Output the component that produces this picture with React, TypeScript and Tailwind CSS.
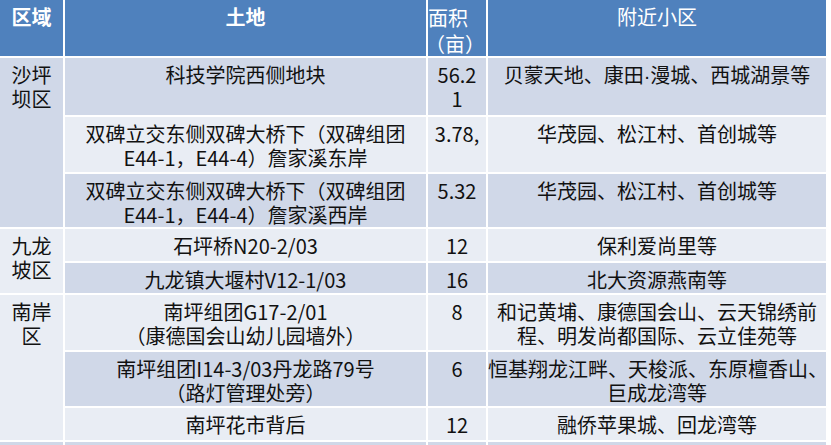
import React from "react";

const DARK = "bg-[#D0D8E8]";
const LIGHT = "bg-[#E9EDF4]";

type Cell = { lines: React.ReactNode[]; bg: string; span?: string; align?: string };

function C({ lines, bg, span = "", align = "text-center" }: Cell) {
  return (
    <div className={`${bg} ${span} ${align} pt-[5px] leading-[24px] text-[20px] text-[#111] whitespace-nowrap`}>
      {lines.map((l, i) => (
        <div key={i}>{l}</div>
      ))}
    </div>
  );
}

export default function App() {
  return (
    <div
      className="w-[831px] h-[445px] overflow-hidden bg-white"
      style={{ fontFamily: '"Noto Sans CJK SC", "Noto Sans", sans-serif' }}
    >
      <div className="grid grid-cols-[63px_361px_58px_338px] grid-rows-[56px_57px_55px_53px_32px_30px_55px_54px_32px_30px] gap-[2px] w-[826px]">
        {/* header */}
        <div className="bg-[#4F81BD] text-white text-center pt-[5px] leading-[24px] text-[20px] font-bold">区域</div>
        <div className="bg-[#4F81BD] text-white text-center pt-[5px] leading-[24px] text-[20px] font-bold">土地</div>
        <div className="bg-[#4F81BD] text-white text-left pt-[5px] leading-[26px] text-[20px] whitespace-nowrap">
          <div>面积</div>
          <div className="-ml-[3px]">（亩）</div>
        </div>
        <div className="bg-[#4F81BD] text-white text-center pt-[5px] leading-[24px] text-[20px]">附近小区</div>

        {/* row 1 */}
        <C lines={["沙坪", "坝区"]} bg={DARK} span="row-span-3" />
        <C lines={["科技学院西侧地块"]} bg={DARK} />
        <C lines={["56.2", "1"]} bg={DARK} />
        <C
          lines={[
            <>
              贝蒙天地、康田<span className="font-['Liberation_Sans',sans-serif]">·</span>漫城、西城湖景等
            </>,
          ]}
          bg={DARK}
        />

        {/* row 2 */}
        <C lines={["双碑立交东侧双碑大桥下（双碑组团", "E44-1，E44-4）詹家溪东岸"]} bg={LIGHT} />
        <C lines={["3.78,"]} bg={LIGHT} />
        <C lines={["华茂园、松江村、首创城等"]} bg={LIGHT} />

        {/* row 3 */}
        <C lines={["双碑立交东侧双碑大桥下（双碑组团", "E44-1，E44-4）詹家溪西岸"]} bg={DARK} />
        <C lines={["5.32"]} bg={DARK} />
        <C lines={["华茂园、松江村、首创城等"]} bg={DARK} />

        {/* row 4 */}
        <C lines={["九龙", "坡区"]} bg={LIGHT} span="row-span-2" />
        <C lines={["石坪桥N20-2/03"]} bg={LIGHT} />
        <C lines={["12"]} bg={LIGHT} />
        <C lines={["保利爱尚里等"]} bg={LIGHT} />

        {/* row 5 */}
        <C lines={["九龙镇大堰村V12-1/03"]} bg={DARK} />
        <C lines={["16"]} bg={DARK} />
        <C lines={["北大资源燕南等"]} bg={DARK} />

        {/* row 6 */}
        <C lines={["南岸", "区"]} bg={LIGHT} span="row-span-3" />
        <C lines={["南坪组团G17-2/01", "（康德国会山幼儿园墙外）"]} bg={LIGHT} />
        <C lines={["8"]} bg={LIGHT} />
        <C lines={["和记黄埔、康德国会山、云天锦绣前", "程、明发尚都国际、云立佳苑等"]} bg={LIGHT} />

        {/* row 7 */}
        <C lines={["南坪组团I14-3/03丹龙路79号", "（路灯管理处旁）"]} bg={DARK} />
        <C lines={["6"]} bg={DARK} />
        <C lines={["恒基翔龙江畔、天梭派、东原檀香山、", "巨成龙湾等"]} bg={DARK} />

        {/* row 8 */}
        <C lines={["南坪花市背后"]} bg={LIGHT} />
        <C lines={["12"]} bg={LIGHT} />
        <C lines={["融侨苹果城、回龙湾等"]} bg={LIGHT} />

        {/* row 9 (cut off) */}
        <div className={DARK} />
        <div className={DARK} />
        <div className={DARK} />
        <div className={DARK} />
      </div>
    </div>
  );
}
